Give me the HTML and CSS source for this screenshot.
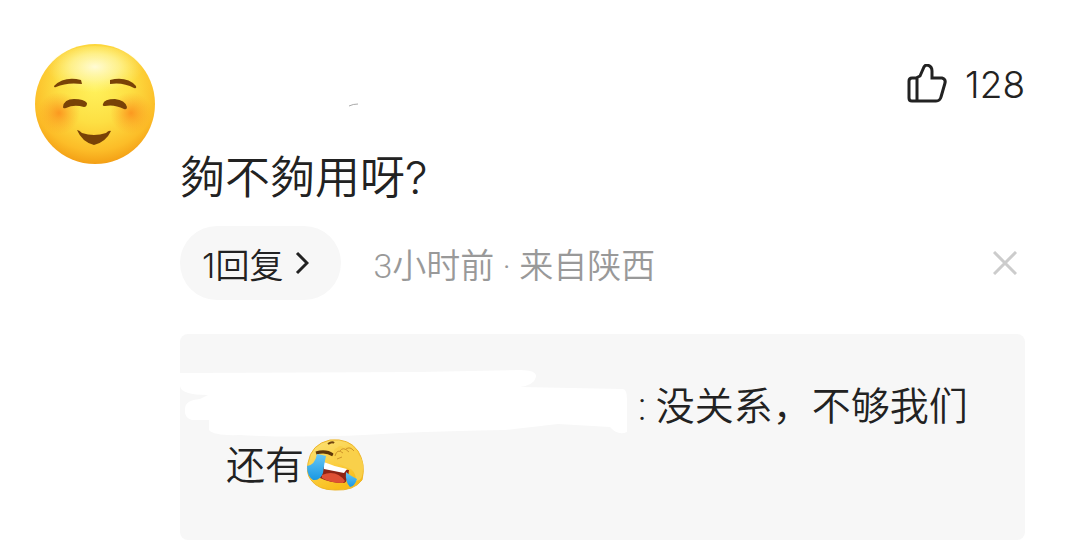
FILE: index.html
```html
<!DOCTYPE html>
<html lang="zh-CN">
<head>
    <meta charset="UTF-8">
    <meta name="viewport" content="width=device-width, initial-scale=1.0">
    <title>评论</title>
    <link rel="stylesheet" href="styles.css">
</head>
<body>
    <article class="comment">
        <svg class="avatar" viewBox="0 0 122 122" role="img" aria-label="头像">
            <defs>
                <radialGradient id="face" cx="50%" cy="36%" r="66%">
                    <stop offset="0" stop-color="#fff25c"/>
                    <stop offset="0.45" stop-color="#fddf43"/>
                    <stop offset="0.8" stop-color="#fcbd28"/>
                    <stop offset="1" stop-color="#f29a12"/>
                </radialGradient>
                <radialGradient id="shine" cx="50%" cy="40%">
                    <stop offset="0" stop-color="#fffcdc" stop-opacity="0.95"/>
                    <stop offset="0.5" stop-color="#fffab8" stop-opacity="0.6"/>
                    <stop offset="1" stop-color="#fff68a" stop-opacity="0"/>
                </radialGradient>
                <radialGradient id="blush">
                    <stop offset="0" stop-color="#fb8417" stop-opacity="0.75"/>
                    <stop offset="1" stop-color="#fb9a20" stop-opacity="0"/>
                </radialGradient>
            </defs>
            <circle cx="61" cy="61" r="60" fill="url(#face)"/>
            <ellipse cx="61" cy="29" rx="48" ry="26" fill="url(#shine)"/>
            <circle cx="25" cy="70" r="21" fill="url(#blush)"/>
            <circle cx="97" cy="70" r="21" fill="url(#blush)"/>
            <g fill="#794207">
                <path d="M20 43Q30 33 47 37L48 41Q33 39 22 44Q20 45 20 43Z"/>
                <path d="M76 37Q93 33 102 43Q103 46 100 45Q89 39 76 41Z"/>
                <path d="M29 64Q30 56 40 56Q50 56 53 60Q53 64 50 64Q40 61 32 65Q29 66 29 64Z"/>
                <path d="M69 61Q70 56 81 56Q91 57 93 64Q93 67 90 66Q80 61 71 63Q68 63 69 61Z"/>
                <path d="M43 87Q45 87 48 90Q60 94 72 90Q75 87 77 88Q72 99 60 102Q48 99 43 87Z"/>
            </g>
        </svg>

        <div class="content">
            <header class="comment-header">
                <svg class="name-trace" viewBox="0 0 12 4" aria-hidden="true">
                    <path d="M1 3Q5 1 10 1" fill="none" stroke="#aaa"/>
                </svg>
                <button class="like" type="button" aria-label="点赞 128">
                    <svg viewBox="0 0 40 40" aria-hidden="true">
                        <path d="M9 14L13 12L17 3Q18 1 20 1Q25 2 25 7V14H35Q39 15 38 19L34 33Q33 37 29 37H5Q2 37 2 34V17Q2 14 5 14H10V37"/>
                    </svg>
                    <span>128</span>
                </button>
            </header>

            <p class="text">夠不夠用呀?</p>

            <div class="meta">
                <button class="replies-btn" type="button">
                    <span>1回复</span>
                    <svg viewBox="0 0 14 24" aria-hidden="true"><path d="M2 2L12 12L2 22"/></svg>
                </button>
                <span class="info">3小时前 · 来自陕西</span>
                <button class="close-btn" type="button" aria-label="关闭">
                    <svg viewBox="0 0 24 24" aria-hidden="true"><path d="M1 1L23 23M23 1L1 23"/></svg>
                </button>
            </div>

            <section class="reply">
                <!-- закрашенное имя -->
                <svg class="reply-mask" viewBox="0 0 450 72" aria-hidden="true">
                    <path d="M0 5L240 4L340 2Q357 2 356 9Q354 17 340 19L442 21Q447 20 447 32V64Q438 68 430 59L378 56L325 62Q270 63 220 65Q130 71 60 67Q34 68 29 62V52H12Q4 50 5 41Q5 32 20 31L28 27Q1 27 0 18Z"/>
                </svg>
                <p class="reply-text"><span class="reply-name"></span>: 没关系，不够我们还有<svg class="emoji" viewBox="0 0 58 54" role="img" aria-label="笑哭">
                    <defs>
                        <linearGradient id="laugh" x1="0" y1="0" x2="0.5" y2="1">
                            <stop offset="0" stop-color="#fbe37a"/>
                            <stop offset="0.55" stop-color="#fbd044"/>
                            <stop offset="1" stop-color="#f9bd19"/>
                        </linearGradient>
                        <linearGradient id="tear" x1="0" y1="0" x2="0" y2="1">
                            <stop offset="0" stop-color="#68c7f5"/>
                            <stop offset="1" stop-color="#1a98e2"/>
                        </linearGradient>
                    </defs>
                    <path d="M2 25Q5 6 24 2Q43 0 52 13Q60 26 56 42Q48 53 29 52Q12 52 5 42Q0 36 2 25Z" fill="url(#laugh)" stroke="#edb52b"/>
                    <path d="M18 24Q29 31 43 32Q42 44 38 45Q24 45 14 40Z" fill="#8d2415"/>
                    <path d="M16 37Q30 31 39 43L37 45Q24 45 16 40Z" fill="#df5034"/>
                    <path d="M18 24Q29 29 41 31L38 35Q28 33 18 31Z" fill="#fff"/>
                    <path d="M10 15Q20 12 27 17" fill="none" stroke="#5d360a" stroke-width="3"/>
                    <path d="M22 6Q26 3 28 5" fill="none" stroke="#6f4410" stroke-width="2"/>
                    <path d="M29 24Q25 11 31 10Q34 6 38 10Q44 6 47 13Q58 18 57 31Q57 43 50 43Q50 32 42 30Z" fill="#f9d04a"/>
                    <path d="M29 18Q31 10 37 15M34 13Q37 8 43 14M40 11Q44 8 48 13M31 21L36 19" fill="none" stroke="#cf962b"/>
                    <path d="M11 16Q17 17 20 18Q18 26 17 35Q14 43 7 42Q1 38 1 28Q9 27 11 16Z" fill="url(#tear)"/>
                    <path d="M40 34Q43 37 51 41Q49 48 44 49Q39 44 40 34Z" fill="url(#tear)"/>
                </svg></p>
            </section>
        </div>
    </article>
</body>
</html>
```
FILE: styles.css
```css
* {
    box-sizing: border-box;
}

body {
    margin: 0;
    background-color: #fff;
    color: #222;
    font-family: Inter, "Noto Sans CJK SC", sans-serif;
    font-weight: 350;
}

button {
    padding: 0;
    border: none;
    background: none;
    color: inherit;
    font: inherit;
    cursor: pointer;
}

p {
    margin: 0;
}

svg {
    display: block;
    flex: none;
}

.comment {
    display: flex;
    align-items: flex-start;
    gap: 24px;
    padding: 43px 40px 12px 34px;
}

.avatar {
    width: 122px;
    height: 122px;
}

.content {
    flex: 1;
    min-width: 0;
}

/* Верхняя строка */
.comment-header {
    display: flex;
    align-items: center;
    justify-content: space-between;
    height: 82px;
    padding-left: 168px;
}

.name-trace {
    align-self: flex-end;
    width: 12px;
    height: 4px;
    margin-bottom: 18px;
}

.like {
    display: flex;
    align-items: center;
    gap: 18px;
    font-size: 37px;
    font-weight: 300;
}

.like svg {
    width: 40px;
    height: 40px;
}

.like path,
.replies-btn path,
.close-btn path {
    fill: none;
    stroke: #222;
    stroke-width: 3;
}

.text {
    margin-top: 4px;
    font-family: Inter, "Noto Sans CJK TC", sans-serif;
    font-size: 45px;
    line-height: 97px;
}

/* Ответы, время и место */
.meta {
    display: flex;
    align-items: center;
    font-size: 34px;
}

.replies-btn {
    display: flex;
    align-items: center;
    gap: 12px;
    height: 74px;
    padding: 0 32px 0 22px;
    border-radius: 37px;
    background-color: #f7f7f7;
}

.replies-btn svg {
    width: 14px;
    height: 24px;
}

.info {
    margin-left: 32px;
    color: #999;
    font-family: Roboto, "Noto Sans CJK SC", sans-serif;
}

.close-btn {
    margin-left: auto;
    padding: 8px;
}

.close-btn svg {
    width: 24px;
    height: 24px;
}

.close-btn path {
    stroke: #ccc;
}

.reply {
    position: relative;
    min-height: 206px;
    margin-top: 34px;
    padding: 44px 46px;
    border-radius: 8px;
    background-color: #f7f7f7;
}

.reply-mask {
    position: absolute;
    top: 34px;
    left: 0;
    width: 450px;
    height: 72px;
    fill: #fff;
}

.reply-text {
    font-family: Roboto, "Noto Sans CJK SC", sans-serif;
    font-size: 39px;
    line-height: 59px;
}

.reply-name {
    display: inline-block;
    width: 412px;
}

.emoji {
    display: inline-block;
    width: 58px;
    height: 54px;
    margin: -14px 2px -6px;
    vertical-align: middle;
}
```
